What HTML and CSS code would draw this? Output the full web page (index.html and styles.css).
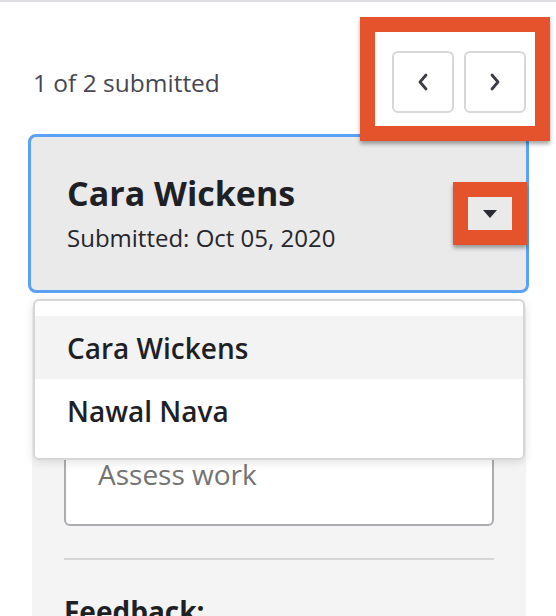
FILE: index.html
```html
<!DOCTYPE html>
<html lang="en">
<head>
    <meta charset="UTF-8">
    <meta name="viewport" content="width=device-width, initial-scale=1.0">
    <title>Submissions</title>
    <link rel="stylesheet" href="styles.css">
</head>
<body>

<div class="topbar"></div>

<div class="page">
    <div class="header">
        <span class="count">1 of 2 submitted</span>
        <div class="pager">
            <button class="pager-btn" aria-label="Previous">
                <svg width="12" height="18" viewBox="0 0 12 18"><polyline points="9,2 3,9 9,16" fill="none" stroke="#3c3c46" stroke-width="2.8" stroke-linecap="round" stroke-linejoin="round"/></svg>
            </button>
            <button class="pager-btn" aria-label="Next">
                <svg width="12" height="18" viewBox="0 0 12 18"><polyline points="3,2 9,9 3,16" fill="none" stroke="#3c3c46" stroke-width="2.8" stroke-linecap="round" stroke-linejoin="round"/></svg>
            </button>
        </div>
    </div>

    <div class="student-select">
        <div class="student-card">
            <div class="student-info">
                <div class="student-name">Cara Wickens</div>
                <div class="student-date">Submitted: Oct 05, 2020</div>
            </div>
            <svg class="caret" width="14" height="8" viewBox="0 0 14 8"><polygon points="0,0 14,0 7,8" fill="#2b2b33"/></svg>
        </div>

        <ul class="student-menu">
            <li class="student-option active">Cara Wickens</li>
            <li class="student-option">Nawal Nava</li>
        </ul>
    </div>

    <div class="panel">
        <div class="assess-box">Assess work</div>
        <hr class="divider">
        <h3 class="feedback-title">Feedback:</h3>
    </div>
</div>

<div class="callout callout-pager"></div>
<div class="callout callout-caret"></div>

</body>
</html>
```

FILE: styles.css
```css
body {
    margin: 0;
    font-family: "Open Sans", "Noto Sans", sans-serif;
    background: white;
    color: #1f1f26;
    overflow: hidden;
}
.topbar {
    height: 2px;
    background: #dedee2;
}
.page {
    padding: 0 27px 0 28px;
}
.header {
    display: flex;
    align-items: center;
    justify-content: space-between;
    margin-top: 49px;
    padding: 0 3px 0 5px;
}
.count {
    font-size: 24.5px;
    color: #474752;
}
.pager {
    display: flex;
    gap: 10px;
}
.pager-btn {
    width: 62px;
    height: 62px;
    padding: 0;
    display: flex;
    align-items: center;
    justify-content: center;
    background: white;
    border: 2px solid #d7d7d7;
    border-radius: 6px;
}
.student-select {
    position: relative;
    margin-top: 21px;
}
.student-card {
    height: 153px;
    display: flex;
    align-items: center;
    justify-content: space-between;
    padding: 0 29px 0 36px;
    background: #eaeaea;
    border: 3px solid #5aa2f5;
    border-radius: 8px;
}
.student-name {
    font-size: 34px;
    font-weight: bold;
    line-height: 42px;
}
.student-date {
    margin-top: 7px;
    font-size: 24px;
    color: #26262c;
    line-height: 34px;
}
.student-menu {
    position: absolute;
    top: calc(100% + 6px);
    left: 5px;
    right: 4px;
    z-index: 2;
    margin: 0;
    padding: 15px 0 16px;
    list-style: none;
    background: white;
    border: 2px solid #d6d6d6;
    border-radius: 6px;
    box-shadow: 0 2px 10px rgba(0, 0, 0, 0.12);
}
.student-option {
    height: 63px;
    display: flex;
    align-items: center;
    padding-left: 32px;
    font-size: 28px;
    font-weight: 600;
    color: #1f1f26;
}
.student-option.active {
    background: #f3f3f3;
}
.panel {
    margin: 14px 3px 0 4px;
    padding: 126px 32px 40px;
    background: #f4f4f4;
}
.assess-box {
    height: 69px;
    padding: 20px 32px 0;
    background: white;
    border: 2px solid #acacb0;
    border-radius: 6px;
    font-size: 28px;
    color: #737373;
}
.divider {
    margin: 32px 0 0;
    border: none;
    height: 2px;
    background: #d6d6d6;
}
.feedback-title {
    margin: 32px 0 0;
    font-size: 28px;
    font-weight: bold;
}
.callout {
    position: absolute;
    border: 15px solid #e5532c;
    box-shadow: 0 3px 4px rgba(0, 0, 0, 0.35);
}
.callout-pager {
    left: 360px;
    top: 17px;
    width: 160px;
    height: 94px;
}
.callout-caret {
    left: 453px;
    top: 182px;
    width: 44px;
    height: 33px;
}
```
